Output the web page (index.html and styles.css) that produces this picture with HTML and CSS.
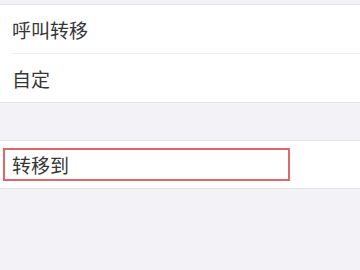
FILE: index.html
```html
<!DOCTYPE html>
<html lang="zh">
<head>
<meta charset="utf-8">
<link rel="stylesheet" href="styles.css">
</head>
<body>
<div class="page">
  <div class="top-gap"></div>
  <div class="group">
    <div class="row sep"><span class="label">呼叫转移</span></div>
    <div class="row"><span class="label">自定</span></div>
  </div>
  <div class="gap"></div>
  <div class="group">
    <div class="row row-field">
      <div class="field"><span class="label">转移到</span></div>
    </div>
  </div>
  <div class="bottom"></div>
</div>
</body>
</html>
```
FILE: styles.css
```css
html, body {
  margin: 0;
  padding: 0;
  background: #f3f2f7;
}
.page {
  width: 360px;
  height: 270px;
  overflow: hidden;
  font-family: "Noto Sans CJK SC", "Noto Sans", sans-serif;
  color: #363636;
}
.top-gap {
  height: 4px;
}
.group {
  background: #ffffff;
  border-top: 1px solid #e4e4e8;
  border-bottom: 1px solid #e4e4e8;
}
.row {
  height: 48px;
  display: flex;
  align-items: center;
  padding-left: 12px;
  position: relative;
}
.row.sep::after {
  content: "";
  position: absolute;
  left: 12px;
  right: 0;
  bottom: 0;
  height: 1px;
  background: #ececef;
}
.row.sep {
  height: 49px;
}
.label {
  font-size: 19px;
  line-height: 1;
}
.gap {
  height: 37px;
}
.row-field {
  height: 47px;
  padding-left: 3px;
  align-items: flex-start;
}
.field {
  width: 276px;
  height: 29px;
  border: 2px solid #e0666a;
  display: flex;
  align-items: center;
  padding-left: 7px;
  margin-top: 7px;
}
```
